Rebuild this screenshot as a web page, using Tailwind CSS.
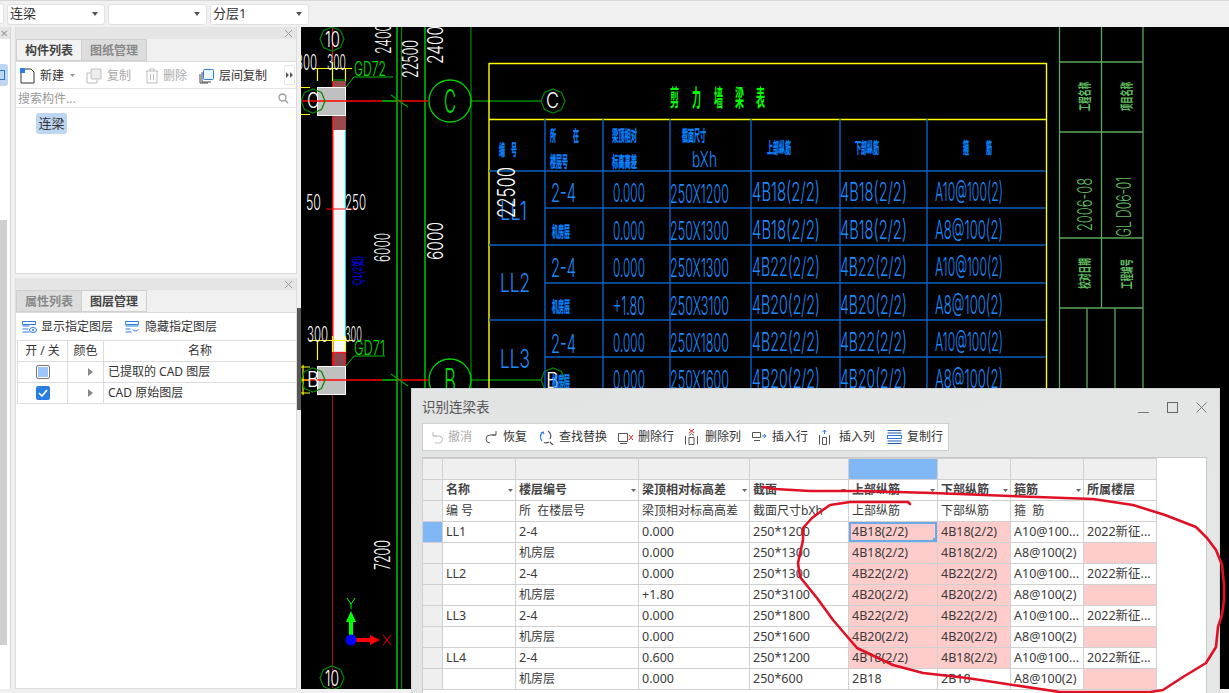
<!DOCTYPE html>
<html lang="zh">
<head>
<meta charset="utf-8">
<title>识别连梁表</title>
<script src="https://cdn.jsdelivr.net/npm/@tailwindcss/browser@4"></script>
</head>
<body class="m-0 overflow-hidden">
<div class="relative w-[1229px] h-[693px] overflow-hidden bg-[#f0f0f0] text-[#333] text-[12px] font-['Noto_Sans','Noto_Sans_CJK_SC',sans-serif]">

  <!-- top bar -->
  <div class="h-[27px] border-t border-[#d8d8d8] flex items-center gap-[3px] pl-[7px] relative">
    <div class="absolute left-[-6px] top-[2px] w-[10px] h-[21px] bg-white border border-[#e2e2e2] rounded-[3px]"></div>
    <div class="w-[98px] h-[21px] bg-white border border-[#e2e2e2] rounded-[3px] flex items-center justify-between pl-[2px] pr-[6px] text-[13px]"><span>连梁</span><svg width="6" height="4"><path d="M0 0h6L3 4z" fill="#555"/></svg></div>
    <div class="w-[99px] h-[21px] bg-white border border-[#e2e2e2] rounded-[3px] flex items-center justify-end pr-[6px]"><svg width="6" height="4"><path d="M0 0h6L3 4z" fill="#555"/></svg></div>
    <div class="w-[99px] h-[21px] bg-white border border-[#e2e2e2] rounded-[3px] flex items-center justify-between pl-[2px] pr-[6px] text-[13px]"><span>分层1</span><svg width="6" height="4"><path d="M0 0h6L3 4z" fill="#555"/></svg></div>
  </div>

  <!-- main -->
  <div class="flex h-[662px]">
    <!-- left dock -->
    <div class="w-[301px] h-full flex relative">
      <div class="w-[11px] h-full flex flex-col border-r border-[#d4d4d4] bg-white relative">
        <div class="h-[12px] bg-[#e5e5e5] text-[#999] text-[10px] leading-[12px]">✕</div>
        <div class="absolute left-0 top-[37px] w-[8px] h-[22px] bg-[#bdd7f3] rounded-r-[3px] flex items-center"><div class="w-[5px] h-[10px] border border-[#2a78c8] border-l-0"></div></div>
        <div class="absolute left-0 top-[193px] w-[7px] h-[425px] bg-[#cfcfcf]"></div>
      </div>
      <div class="w-[4px]"></div>
      <div class="w-[282px] flex flex-col gap-[4px] h-full">
        <!-- upper panel -->
        <div class="h-[247px] bg-white border border-[#dcdcdc] border-t-0 flex flex-col">
          <div class="h-[12px] bg-[#e5e5e5] flex items-center justify-end pr-[3px] text-[#999]"><svg width="9" height="9" viewBox="0 0 9 9"><path d="M1 1l7 7M8 1l-7 7" stroke="#999" fill="none"/></svg></div>
          <div class="h-[23px] flex bg-[#f0f0f0] border-b border-[#dcdcdc]">
            <div class="w-[66px] pt-[1px] bg-[#f2f2f2] border border-[#cfcfcf] flex items-center justify-center font-bold text-[#444]">构件列表</div>
            <div class="w-[65px] pt-[1px] bg-[#dddddd] border border-[#cfcfcf] border-l-0 flex items-center justify-center font-bold text-[#888]">图纸管理</div>
          </div>
          <div class="h-[27px] pt-[1px] flex items-center border-b border-[#e4e4e4] relative">
            <svg class="ml-[4px]" width="16" height="16" viewBox="0 0 16 16"><path d="M1 5v10h13V4l-3-3H5" fill="none" stroke="#333"/><path d="M0 0h5v5H0z" fill="#2b7de0"/></svg>
            <span class="ml-[4px]">新建</span>
            <svg class="ml-[6px]" width="5" height="3"><path d="M0 0h5L2.500 3z" fill="#999"/></svg>
            <svg class="ml-[11px]" width="16" height="16" viewBox="0 0 16 16"><rect x="5" y="1" width="10" height="10" rx="1" fill="#eee" stroke="#bbb"/><path d="M4 5H1v10h10v-3" fill="none" stroke="#bbb"/></svg>
            <span class="ml-[5px] text-[#aaa]">复制</span>
            <svg class="ml-[14px]" width="14" height="16" viewBox="0 0 14 16"><path d="M1 3h12M5 3V1h4v2M2 3v12h10V3M5.500 6v6M8.500 6v6" fill="none" stroke="#bbb"/></svg>
            <span class="ml-[4px] text-[#aaa]">删除</span>
            <svg class="ml-[12px]" width="15" height="16" viewBox="0 0 15 16"><rect x="4.500" y="1.500" width="10" height="10" rx="1" fill="#eef5ff" stroke="#2b7de0"/><path d="M3 4v10h9M1 6v9h8" fill="none" stroke="#444"/></svg>
            <span class="ml-[5px]">层间复制</span>
            <div class="absolute left-[268px] top-[3px] w-[11px] h-[20px] bg-white border border-[#e6e6e6] rounded-[2px] flex items-center justify-center"><svg width="8" height="6"><path d="M0 0l3 3-3 3zM4 0l3 3-3 3z" fill="#555"/></svg></div>
          </div>
          <div class="h-[19px] pt-[1px] flex items-center justify-between pl-[2px] pr-[7px] border-b border-[#e4e4e4] text-[#999]">
            <span>搜索构件...</span>
            <svg width="11" height="11" viewBox="0 0 11 11"><circle cx="4.500" cy="4.500" r="3.500" fill="none" stroke="#999" stroke-width="1.300"/><path d="M7 7l3 3" stroke="#999" stroke-width="1.300"/></svg>
          </div>
          <div class="pl-[20px] pt-[5px]"><span class="inline-flex items-center justify-center w-[31px] h-[21px] bg-[#bdd7f3] rounded-[3px] text-[13px]">连梁</span></div>
        </div>
        <!-- lower panel -->
        <div class="flex-1 bg-white border border-[#dcdcdc] border-t-0 flex flex-col">
          <div class="h-[12px] bg-[#e5e5e5] flex items-center justify-end pr-[3px]"><svg width="9" height="9" viewBox="0 0 9 9"><path d="M1 1l7 7M8 1l-7 7" stroke="#999" fill="none"/></svg></div>
          <div class="h-[23px] flex bg-[#f0f0f0] border-b border-[#dcdcdc]">
            <div class="w-[66px] pt-[1px] bg-[#dddddd] border border-[#cfcfcf] flex items-center justify-center font-bold text-[#888]">属性列表</div>
            <div class="w-[65px] pt-[1px] bg-[#f2f2f2] border border-[#cfcfcf] border-l-0 flex items-center justify-center font-bold text-[#444]">图层管理</div>
          </div>
          <div class="h-[27px] pt-[1px] flex items-center">
            <svg class="ml-[5px]" width="16" height="14" viewBox="0 0 16 14"><g fill="none" stroke="#2b7de0"><path d="M1.500 1.500h13v3h-13zM1.500 6h7M1.500 9h6M1.500 12h7"/><ellipse cx="12" cy="10" rx="3.500" ry="2.500"/></g><circle cx="12" cy="10" r="1" fill="#2b7de0"/></svg>
            <span class="ml-[4px]">显示指定图层</span>
            <svg class="ml-[11px]" width="16" height="14" viewBox="0 0 16 14"><g fill="none" stroke="#2b7de0"><path d="M1.500 1.500h13v3h-13zM1.500 6h13M1.500 9h5M1.500 12h6M8.500 9.500c2 2 4 2 6 0"/></g></svg>
            <span class="ml-[5px]">隐藏指定图层</span>
          </div>
          <table class="table-fixed border-collapse ml-[1px] w-[279px]">
            <colgroup><col class="w-[50px]"><col class="w-[36px]"><col class="w-[193px]"></colgroup>
            <tr class="h-[21px]"><td class="border border-[#dcdcdc] text-center p-0">开 / 关</td><td class="border border-[#dcdcdc] text-center p-0">颜色</td><td class="border border-[#dcdcdc] text-center p-0">名称</td></tr>
            <tr class="h-[21px]"><td class="border border-[#dcdcdc] p-0"><div class="mx-auto w-[14px] h-[14px] border border-[#777] rounded-[2px] bg-white p-[1px]"><div class="w-full h-full bg-[#9cc6fb]"></div></div></td><td class="border border-[#dcdcdc] p-0"><svg class="ml-[20px]" width="5" height="8"><path d="M0 0l5 4-5 4z" fill="#888"/></svg></td><td class="border border-[#dcdcdc] p-0 pl-[4px]">已提取的 CAD 图层</td></tr>
            <tr class="h-[21px]"><td class="border border-[#dcdcdc] p-0"><div class="mx-auto w-[14px] h-[14px] rounded-[2px] bg-[#2b7de0] flex items-center justify-center"><svg width="10" height="8" viewBox="0 0 10 8"><path d="M1 4l3 3 5-6" fill="none" stroke="#fff" stroke-width="1.600"/></svg></div></td><td class="border border-[#dcdcdc] p-0"><svg class="ml-[20px]" width="5" height="8"><path d="M0 0l5 4-5 4z" fill="#888"/></svg></td><td class="border border-[#dcdcdc] p-0 pl-[4px]">CAD 原始图层</td></tr>
          </table>
        </div>
      </div>
      <div class="absolute left-[297px] top-[281px] w-[4px] h-[102px] bg-[#555]"></div>
    </div>

    <!-- CAD canvas -->
    <div class="flex-1 bg-black h-full">
      <svg width="928" height="662" viewBox="301 27 928 662" class="block">
        <!-- grid lines -->
        <g fill="none">
          <path d="M332.500 27V395" stroke="#ff0000"/>
          <path d="M332.500 395V688" stroke="#a81010"/>
          <path d="M397 27V689M425 27V689" stroke="#00e000" stroke-width="1.300"/>
          <path d="M401.500 27V689M471 27V689" stroke="#008800" stroke-width="1.200"/>
        </g>
        <!-- wall -->
        <rect x="333" y="130" width="13" height="225" fill="#f6f8f8"/>
        <path d="M345.500 130V355" stroke="#00e0e0" fill="none"/>
        <path d="M333 130V355" stroke="#ff0000" fill="none"/>
        <path d="M326 209H356" stroke="#ff0000" fill="none"/>
        <rect x="333" y="81" width="13" height="7" fill="#9a4a4a"/>
        <rect x="333" y="115" width="13" height="15" fill="#9a4a4a"/>
        <rect x="317.500" y="87.500" width="28" height="28" fill="#c0c0c0" stroke="#fff"/>
        <rect x="333.500" y="352.500" width="12" height="14" fill="#8a4a50" stroke="#ff1020" stroke-width="1.300"/>
        <rect x="317.500" y="366.500" width="28" height="28" fill="#c0c0c0" stroke="#fff"/>
        <!-- axes through C / B -->
        <g fill="none" stroke-width="1.300">
          <path d="M346 101H382M397 101H428M346 380H382M397 380H428" stroke="#ff0000"/>
          <path d="M382 101H397M382 380H397" stroke="#00c800"/>
          <path d="M471 101H541M471 380H541" stroke="#008800"/>
          <path d="M391 95l17 12M391 374l17 12" stroke="#00a000"/>
          <path d="M301 101H346M301 380H346" stroke="#ff0000"/>
        </g>
        <!-- yellow dims -->
        <g fill="none" stroke="#ffff00" stroke-width="1.200">
          <path d="M312 68.500H352M317.500 68V81M332.500 62V81M345.500 68V81"/>
          <path d="M301 87.500H310M301 114.500H310"/>
          <path d="M309 340.500H353M317.500 340V360M332.500 336V352M345.500 336V352"/>
          <path d="M303 365V395M301 367H310M301 380H310M301 393H310"/>
        </g>
        <path d="M333 80h13" stroke="#00d000" fill="none"/>
        <path d="M346 87L354 77H393M346 366L354 356H385" stroke="#00c000" fill="none"/>
        <!-- circles -->
        <g fill="none">
          <circle cx="450" cy="101" r="21" stroke="#00d800" stroke-width="1.300"/>
          <circle cx="450" cy="380" r="21" stroke="#00d800" stroke-width="1.300"/>
          <polygon points="325,101 321.500,109.500 313,113 304.500,109.500 301,101 304.500,92.500 313,89 321.500,92.500" stroke="#008800" stroke-width="1.200"/>
          <polygon points="325,380 321.500,388.500 313,392 304.500,388.500 301,380 304.500,371.500 313,368 321.500,371.500" stroke="#008800" stroke-width="1.200"/>
          <polygon points="565,101 561.500,109.500 553,113 544.500,109.500 541,101 544.500,92.500 553,89 561.500,92.500" stroke="#008800" stroke-width="1.200"/>
          <polygon points="565,380 561.500,388.500 553,392 544.500,388.500 541,380 544.500,371.500 553,368 561.500,371.500" stroke="#008800" stroke-width="1.200"/>
          <polygon points="344,39 340.500,47.500 332,51 323.500,47.500 320,39 323.500,30.500 332,27 340.500,30.500" stroke="#008800" stroke-width="1.200"/>
          <polygon points="344,678 340.500,686.500 332,690 323.500,686.500 320,678 323.500,669.500 332,666 340.500,669.500" stroke="#008800" stroke-width="1.200"/>
        </g>
        <!-- white CAD text -->
        <g fill="#ffffff" font-family="Inter" font-weight="300" font-size="21">
          <text x="325" y="47" textLength="15" lengthAdjust="spacingAndGlyphs">10</text>
          <text x="325" y="686" textLength="14" lengthAdjust="spacingAndGlyphs">10</text>
          <text x="296" y="70" textLength="21" lengthAdjust="spacingAndGlyphs">300</text>
          <text x="327" y="70" textLength="19" lengthAdjust="spacingAndGlyphs">300</text>
          <text x="307" y="342" textLength="21" lengthAdjust="spacingAndGlyphs">300</text>
          <text x="345" y="342" textLength="17" lengthAdjust="spacingAndGlyphs">300</text>
          <text x="306" y="210" textLength="15" lengthAdjust="spacingAndGlyphs">50</text>
          <text x="345" y="210" textLength="21" lengthAdjust="spacingAndGlyphs">250</text>
          <text x="307" y="108" textLength="12" lengthAdjust="spacingAndGlyphs">C</text>
          <text x="307" y="387" textLength="12" lengthAdjust="spacingAndGlyphs">B</text>
          <text x="546" y="108" textLength="13" lengthAdjust="spacingAndGlyphs">C</text>
          <text x="546" y="388" textLength="13" lengthAdjust="spacingAndGlyphs">B</text>
          <text transform="translate(391,54) rotate(-90)" textLength="30" lengthAdjust="spacingAndGlyphs">2400</text>
          <text transform="translate(418,78) rotate(-90)" textLength="38" lengthAdjust="spacingAndGlyphs">22500</text>
          <text transform="translate(443,64) rotate(-90)" textLength="38" lengthAdjust="spacingAndGlyphs">2400</text>
          <text transform="translate(390,262) rotate(-90)" textLength="29" lengthAdjust="spacingAndGlyphs">6000</text>
          <text transform="translate(443,260) rotate(-90)" textLength="38" lengthAdjust="spacingAndGlyphs">6000</text>
          <text transform="translate(390,570) rotate(-90)" textLength="30" lengthAdjust="spacingAndGlyphs">7200</text>
        </g>
        <g fill="#00e000" font-family="Inter" font-weight="300" font-size="32">
          <text x="444" y="113" textLength="12" lengthAdjust="spacingAndGlyphs">C</text>
          <text x="444" y="392" textLength="12" lengthAdjust="spacingAndGlyphs">B</text>
        </g>
        <g fill="#00e000" font-family="Inter" font-weight="300" font-size="20">
          <text x="354" y="76" textLength="32" lengthAdjust="spacingAndGlyphs">GD72</text>
          <text x="354" y="355" textLength="31" lengthAdjust="spacingAndGlyphs">GD71</text>
        </g>
        <text transform="translate(362,285) rotate(-90)" fill="#0000ff" font-family="Liberation Sans,Noto Sans CJK SC" font-size="13" textLength="29" lengthAdjust="spacingAndGlyphs">Q1(2如)</text>

        <!-- beam table -->
        <path d="M489 63V388M1046.500 63V388M489 63.500H1046.500M489 119.500H1046.500" fill="none" stroke="#ffff00" stroke-width="1.400"/>
        <g fill="none" stroke="#0a62c4" stroke-width="1.400">
          <path d="M545 119V388M603 119V388M670 119V388M751 119V388M840 119V388M927 119V388"/>
          <path d="M489 171H1046M545 208H1046M489 245H1046M545 283H1046M489 320H1046M545 357H1046"/>
        </g>
        <g fill="#00ff00" font-family="Noto Sans CJK SC" font-size="23" font-weight="700">
          <text x="670" y="106" textLength="9" lengthAdjust="spacingAndGlyphs">剪</text>
          <text x="692" y="106" textLength="9" lengthAdjust="spacingAndGlyphs">力</text>
          <text x="714" y="106" textLength="9" lengthAdjust="spacingAndGlyphs">墙</text>
          <text x="735" y="106" textLength="9" lengthAdjust="spacingAndGlyphs">梁</text>
          <text x="756" y="106" textLength="9" lengthAdjust="spacingAndGlyphs">表</text>
        </g>
        <g fill="#0a84ff" stroke="#0a84ff" stroke-width="0.400" font-family="Noto Sans CJK SC" font-size="15" font-weight="700">
          <text x="499" y="155" textLength="6" lengthAdjust="spacingAndGlyphs">编</text>
          <text x="511" y="155" textLength="6" lengthAdjust="spacingAndGlyphs">号</text>
          <text x="550" y="141" textLength="6" lengthAdjust="spacingAndGlyphs">所</text>
          <text x="573" y="141" textLength="6" lengthAdjust="spacingAndGlyphs">在</text>
          <text x="550" y="167" textLength="18" lengthAdjust="spacingAndGlyphs">楼层号</text>
          <text x="612" y="141" textLength="25" lengthAdjust="spacingAndGlyphs">梁顶相对</text>
          <text x="612" y="167" textLength="25" lengthAdjust="spacingAndGlyphs">标高高差</text>
          <text x="682" y="141" textLength="24" lengthAdjust="spacingAndGlyphs">截面尺寸</text>
          <text x="767" y="153" textLength="24" lengthAdjust="spacingAndGlyphs">上部纵筋</text>
          <text x="855" y="153" textLength="24" lengthAdjust="spacingAndGlyphs">下部纵筋</text>
          <text x="963" y="153" textLength="6" lengthAdjust="spacingAndGlyphs">箍</text>
          <text x="986" y="153" textLength="6" lengthAdjust="spacingAndGlyphs">筋</text>
          <text x="552" y="237" textLength="18" lengthAdjust="spacingAndGlyphs">机房层</text>
          <text x="552" y="312" textLength="18" lengthAdjust="spacingAndGlyphs">机房层</text>
          <text x="552" y="387" textLength="18" lengthAdjust="spacingAndGlyphs">机房层</text>
        </g>
        <g fill="#1a8cff" font-family="Inter" font-weight="300" font-size="26">
          <text x="692" y="167" font-size="22" textLength="25" lengthAdjust="spacingAndGlyphs">bXh</text>
          <text x="500" y="220" textLength="27" lengthAdjust="spacingAndGlyphs">LL1</text>
          <text x="500" y="292" textLength="30" lengthAdjust="spacingAndGlyphs">LL2</text>
          <text x="500" y="368" textLength="30" lengthAdjust="spacingAndGlyphs">LL3</text>
          <text x="551" y="202" textLength="25" lengthAdjust="spacingAndGlyphs">2-4</text>
          <text x="551" y="277" textLength="25" lengthAdjust="spacingAndGlyphs">2-4</text>
          <text x="551" y="353" textLength="25" lengthAdjust="spacingAndGlyphs">2-4</text>
          <text x="613" y="202" textLength="32" lengthAdjust="spacingAndGlyphs">0.000</text>
          <text x="613" y="240" textLength="32" lengthAdjust="spacingAndGlyphs">0.000</text>
          <text x="613" y="277" textLength="32" lengthAdjust="spacingAndGlyphs">0.000</text>
          <text x="613" y="315" textLength="32" lengthAdjust="spacingAndGlyphs">+1.80</text>
          <text x="613" y="352" textLength="32" lengthAdjust="spacingAndGlyphs">0.000</text>
          <text x="613" y="389" textLength="32" lengthAdjust="spacingAndGlyphs">0.000</text>
          <text x="670" y="203" textLength="59" lengthAdjust="spacingAndGlyphs">250X1200</text>
          <text x="670" y="240" textLength="59" lengthAdjust="spacingAndGlyphs">250X1300</text>
          <text x="670" y="277" textLength="59" lengthAdjust="spacingAndGlyphs">250X1300</text>
          <text x="670" y="315" textLength="59" lengthAdjust="spacingAndGlyphs">250X3100</text>
          <text x="670" y="352" textLength="59" lengthAdjust="spacingAndGlyphs">250X1800</text>
          <text x="670" y="389" textLength="59" lengthAdjust="spacingAndGlyphs">250X1600</text>
          <text x="752" y="201" textLength="68" lengthAdjust="spacingAndGlyphs">4B18(2/2)</text>
          <text x="752" y="239" textLength="68" lengthAdjust="spacingAndGlyphs">4B18(2/2)</text>
          <text x="752" y="276" textLength="68" lengthAdjust="spacingAndGlyphs">4B22(2/2)</text>
          <text x="752" y="314" textLength="68" lengthAdjust="spacingAndGlyphs">4B20(2/2)</text>
          <text x="752" y="351" textLength="68" lengthAdjust="spacingAndGlyphs">4B22(2/2)</text>
          <text x="752" y="388" textLength="68" lengthAdjust="spacingAndGlyphs">4B20(2/2)</text>
          <text x="840" y="201" textLength="67" lengthAdjust="spacingAndGlyphs">4B18(2/2)</text>
          <text x="840" y="239" textLength="67" lengthAdjust="spacingAndGlyphs">4B18(2/2)</text>
          <text x="840" y="276" textLength="67" lengthAdjust="spacingAndGlyphs">4B22(2/2)</text>
          <text x="840" y="314" textLength="67" lengthAdjust="spacingAndGlyphs">4B20(2/2)</text>
          <text x="840" y="351" textLength="67" lengthAdjust="spacingAndGlyphs">4B22(2/2)</text>
          <text x="840" y="388" textLength="67" lengthAdjust="spacingAndGlyphs">4B20(2/2)</text>
          <text x="935" y="201" textLength="68" lengthAdjust="spacingAndGlyphs">A10@100(2)</text>
          <text x="935" y="239" textLength="68" lengthAdjust="spacingAndGlyphs">A8@100(2)</text>
          <text x="935" y="276" textLength="68" lengthAdjust="spacingAndGlyphs">A10@100(2)</text>
          <text x="935" y="314" textLength="68" lengthAdjust="spacingAndGlyphs">A8@100(2)</text>
          <text x="935" y="351" textLength="68" lengthAdjust="spacingAndGlyphs">A10@100(2)</text>
          <text x="935" y="388" textLength="68" lengthAdjust="spacingAndGlyphs">A8@100(2)</text>
        </g>
        <text transform="translate(515,218) rotate(-90)" fill="#ffffff" font-family="Inter" font-weight="300" font-size="24" textLength="51" lengthAdjust="spacingAndGlyphs">22500</text>

        <!-- title block -->
        <g fill="none" stroke="#5aa85a" stroke-width="1.300">
          <path d="M1059.500 27V388M1101.500 27V308M1143 27V388"/>
          <path d="M1059 62H1143M1059 132H1143M1059 238H1143M1059 308H1143M1087 308V388M1115 308V388"/>
        </g>
        <g fill="#60c060" font-family="Noto Sans CJK SC" font-size="13" font-weight="700">
          <text transform="translate(1089,111) rotate(-90)" textLength="29" lengthAdjust="spacingAndGlyphs">工程名称</text>
          <text transform="translate(1131,111) rotate(-90)" textLength="29" lengthAdjust="spacingAndGlyphs">项目名称</text>
          <text transform="translate(1089,289) rotate(-90)" textLength="31" lengthAdjust="spacingAndGlyphs">校对日期</text>
          <text transform="translate(1131,289) rotate(-90)" textLength="30" lengthAdjust="spacingAndGlyphs">工程编号</text>
        </g>
        <g fill="#60c060" font-family="Inter" font-weight="300" font-size="20">
          <text transform="translate(1092,231) rotate(-90)" textLength="53" lengthAdjust="spacingAndGlyphs">2006-08</text>
          <text transform="translate(1131,237) rotate(-90)" textLength="60" lengthAdjust="spacingAndGlyphs">GL D06-01</text>
        </g>

        <!-- UCS -->
        <path d="M351 640V621" stroke="#00ff00" stroke-width="4"/>
        <path d="M351 611l5 11h-10z" fill="#00ff00"/>
        <path d="M351 640h20" stroke="#ff0000" stroke-width="4"/>
        <path d="M380 640l-10 5v-10z" fill="#ff0000"/>
        <circle cx="351" cy="640" r="5.500" fill="#0000ff"/>
        <path d="M347 598l4 6 4-6M351 604v5" stroke="#00ff00" fill="none"/>
        <path d="M383 635l8 10M391 635l-8 10" stroke="#ff0000" fill="none"/>
      </svg>
    </div>
  </div>

  <!-- dialog window -->
  <div class="absolute left-[411px] top-[388px] w-[809px] h-[305px] bg-gradient-to-br from-[#e2e3e3] to-[#e6e8e8] border-l border-t border-r border-[#d4d6d6] flex flex-col">
    <div class="h-[34px] flex items-center justify-between pl-[10px] pr-[12px] pt-[2px] shrink-0">
      <span class="text-[13.500px] text-[#555]">识别连梁表</span>
      <div class="flex items-center gap-[18px]">
        <svg width="11" height="11" viewBox="0 0 11 11"><path d="M0 10.500h11" stroke="#777" fill="none"/></svg>
        <svg width="11" height="11" viewBox="0 0 11 11"><rect x=".5" y=".5" width="10" height="10" stroke="#666" fill="none"/></svg>
        <svg width="11" height="11" viewBox="0 0 11 11"><path d="M.5 .5l10 10M10.500 .5l-10 10" stroke="#777" fill="none"/></svg>
      </div>
    </div>
    <!-- toolbar -->
    <div class="ml-[10px] w-[527px] h-[28px] shrink-0 bg-white border border-[#cfcfcf] flex items-center">
      <svg class="ml-[7px]" width="13" height="13" viewBox="0 0 13 13"><path d="M3 5h6a3 3 0 0 1 0 7H5M3 1v4h4" fill="none" stroke="#bbb"/></svg>
      <span class="ml-[5px] text-[#aaa]">撤消</span>
      <svg class="ml-[13px]" width="13" height="13" viewBox="0 0 13 13"><path d="M11 4H5a4 4 0 0 0 0 8M11 0v4H7" fill="none" stroke="#555"/></svg>
      <span class="ml-[5px]">恢复</span>
      <svg class="ml-[12px]" width="15" height="15" viewBox="0 0 15 15"><path d="M4 2a6 6 0 0 0-1 9M2 3l2-1 1 2" fill="none" stroke="#2b7de0" stroke-width="1.200"/><path d="M9 1a6 6 0 0 1 2 8M11 12l3 3M5 12.500a6 6 0 0 0 5-.5" fill="none" stroke="#555" stroke-width="1.200"/></svg>
      <span class="ml-[5px]">查找替换</span>
      <svg class="ml-[11px]" width="16" height="13" viewBox="0 0 16 13"><path d="M.5 2.500h9v8h-9zM2 12.500h7" fill="none" stroke="#555"/><path d="M11 4l4 5M15 4l-4 5" stroke="#e02020" fill="none"/></svg>
      <span class="ml-[4px]">删除行</span>
      <svg class="ml-[11px]" width="13" height="16" viewBox="0 0 13 16"><path d="M4 6.500l2.500-2 2.500 2M.5 7v8.500M12.500 7v8.500M4 8.500h5v7H4z" fill="none" stroke="#555"/><path d="M4 0l5 4M9 0L4 4" stroke="#e02020" fill="none"/></svg>
      <span class="ml-[7px]">删除列</span>
      <svg class="ml-[11px]" width="15" height="13" viewBox="0 0 15 13"><path d="M.5 1.500h8v5h-8zM2 9.500h6" fill="none" stroke="#555"/><path d="M10 5h4M12 3l2 2-2 2" stroke="#2b7de0" fill="none"/></svg>
      <span class="ml-[5px]">插入行</span>
      <svg class="ml-[11px]" width="11" height="16" viewBox="0 0 11 16"><path d="M.5 6v9.500M10.500 6v9.500M3.500 8.500h4v7h-4z" fill="none" stroke="#555"/><path d="M5.500 5V1M3.500 3l2-2 2 2" stroke="#2b7de0" fill="none"/></svg>
      <span class="ml-[9px]">插入列</span>
      <svg class="ml-[12px]" width="15" height="14" viewBox="0 0 15 14"><path d="M.5 .5h14M.5 13.500h14M.5 11h14M.5 3h14" stroke="#1c5aa8" fill="none"/><rect x=".5" y="5.500" width="14" height="3" fill="none" stroke="#2b7de0"/></svg>
      <span class="ml-[5px]">复制行</span>
    </div>
    <!-- grid -->
    <div class="ml-[10px] mt-[6px] w-[785px] flex-1 bg-white border-l border-t border-r border-[#c8c8c8]">
      <table class="table-fixed border-collapse -ml-[1px] w-[734px] text-[12px] text-[#3a3a3a] [&_td]:border [&_td]:border-[#d0d0d0] [&_td]:p-0 [&_td]:pl-[3px] [&_td]:whitespace-nowrap [&_td]:overflow-hidden [&_tr]:h-[21px]">
        <colgroup><col class="w-[20px]"><col class="w-[73px]"><col class="w-[123px]"><col class="w-[111px]"><col class="w-[99px]"><col class="w-[89px]"><col class="w-[73px]"><col class="w-[73px]"><col class="w-[73px]"></colgroup>
        <tr class="bg-[#efefef]"><td></td><td></td><td></td><td></td><td></td><td class="bg-[#7fb8f5]"></td><td></td><td></td><td></td></tr>
        <tr class="font-bold text-[#444]">
          <td class="bg-[#efefef]"></td>
          <td><div class="flex items-center justify-between pr-[2px]"><span>名称</span><svg width="5" height="3"><path d="M0 0h5L2.500 3z" fill="#666"/></svg></div></td>
          <td><div class="flex items-center justify-between pr-[2px]"><span>楼层编号</span><svg width="5" height="3"><path d="M0 0h5L2.500 3z" fill="#666"/></svg></div></td>
          <td><div class="flex items-center justify-between pr-[2px]"><span>梁顶相对标高差</span><svg width="5" height="3"><path d="M0 0h5L2.500 3z" fill="#666"/></svg></div></td>
          <td><div class="flex items-center justify-between pr-[2px]"><span>截面</span><svg width="5" height="3"><path d="M0 0h5L2.500 3z" fill="#666"/></svg></div></td>
          <td><div class="flex items-center justify-between pr-[2px]"><span>上部纵筋</span><svg width="5" height="3"><path d="M0 0h5L2.500 3z" fill="#666"/></svg></div></td>
          <td><div class="flex items-center justify-between pr-[2px]"><span>下部纵筋</span><svg width="5" height="3"><path d="M0 0h5L2.500 3z" fill="#666"/></svg></div></td>
          <td><div class="flex items-center justify-between pr-[2px]"><span>箍筋</span><svg width="5" height="3"><path d="M0 0h5L2.500 3z" fill="#666"/></svg></div></td>
          <td>所属楼层</td>
        </tr>
        <tr><td class="bg-[#efefef]"></td><td>编 号</td><td>所&nbsp; 在楼层号</td><td>梁顶相对标高高差</td><td>截面尺寸bXh</td><td>上部纵筋</td><td>下部纵筋</td><td>箍&nbsp; 筋</td><td></td></tr>
        <tr class="text-[12.500px]"><td class="bg-[#7fb8f5]"></td><td>LL1</td><td>2-4</td><td>0.000</td><td>250*1200</td><td class="relative bg-[#ffcccc]">4B18(2/2)<span class="absolute inset-0 border-2 border-[#6ea8e6]"></span><span class="absolute right-0 bottom-0 w-[4px] h-[4px] bg-[#6ea8e6]"></span></td><td class="bg-[#ffcccc]">4B18(2/2)</td><td>A10@100...</td><td>2022新征...</td></tr>
        <tr class="text-[12.500px]"><td class="bg-[#efefef]"></td><td></td><td class="text-[12px]">机房层</td><td>0.000</td><td>250*1300</td><td class="bg-[#ffcccc]">4B18(2/2)</td><td class="bg-[#ffcccc]">4B18(2/2)</td><td>A8@100(2)</td><td class="bg-[#ffcccc]"></td></tr>
        <tr class="text-[12.500px]"><td class="bg-[#efefef]"></td><td>LL2</td><td>2-4</td><td>0.000</td><td>250*1300</td><td class="bg-[#ffcccc]">4B22(2/2)</td><td class="bg-[#ffcccc]">4B22(2/2)</td><td>A10@100...</td><td>2022新征...</td></tr>
        <tr class="text-[12.500px]"><td class="bg-[#efefef]"></td><td></td><td class="text-[12px]">机房层</td><td>+1.80</td><td>250*3100</td><td class="bg-[#ffcccc]">4B20(2/2)</td><td class="bg-[#ffcccc]">4B20(2/2)</td><td>A8@100(2)</td><td class="bg-[#ffcccc]"></td></tr>
        <tr class="text-[12.500px]"><td class="bg-[#efefef]"></td><td>LL3</td><td>2-4</td><td>0.000</td><td>250*1800</td><td class="bg-[#ffcccc]">4B22(2/2)</td><td class="bg-[#ffcccc]">4B22(2/2)</td><td>A10@100...</td><td>2022新征...</td></tr>
        <tr class="text-[12.500px]"><td class="bg-[#efefef]"></td><td></td><td class="text-[12px]">机房层</td><td>0.000</td><td>250*1600</td><td class="bg-[#ffcccc]">4B20(2/2)</td><td class="bg-[#ffcccc]">4B20(2/2)</td><td>A8@100(2)</td><td class="bg-[#ffcccc]"></td></tr>
        <tr class="text-[12.500px]"><td class="bg-[#efefef]"></td><td>LL4</td><td>2-4</td><td>0.600</td><td>250*1200</td><td class="bg-[#ffcccc]">4B18(2/2)</td><td class="bg-[#ffcccc]">4B18(2/2)</td><td>A10@100...</td><td>2022新征...</td></tr>
        <tr class="text-[12.500px]"><td class="bg-[#efefef]"></td><td></td><td class="text-[12px]">机房层</td><td>0.000</td><td>250*600</td><td>2B18</td><td>2B18</td><td>A8@100(2)</td><td class="bg-[#ffcccc]"></td></tr>
      </table>
    </div>
  </div>

  <!-- hand-drawn red annotation over the window -->
  <svg class="absolute left-0 top-0 pointer-events-none" width="1229" height="693" viewBox="0 0 1229 693">
    <path d="M763 487L775 489L810 491L860 491L933 493L1010 496L1093 499L1133 505L1165 515L1196 527L1207 538L1216 550L1222 565L1224 585L1224 600L1222 615L1218 627L1216 647L1206 663L1183 677L1163 690L1150 692L1060 692L1000 683L967 678L923 673L893 665L857 648L833 620L817 598L800 577L798 563L803 540L803 528L812 518L820 512L830 505L850 502L908 502L910 504" fill="none" stroke="#e01025" stroke-width="2.600" stroke-linejoin="round" stroke-linecap="round"/>
  </svg>
</div>
</body>
</html>
